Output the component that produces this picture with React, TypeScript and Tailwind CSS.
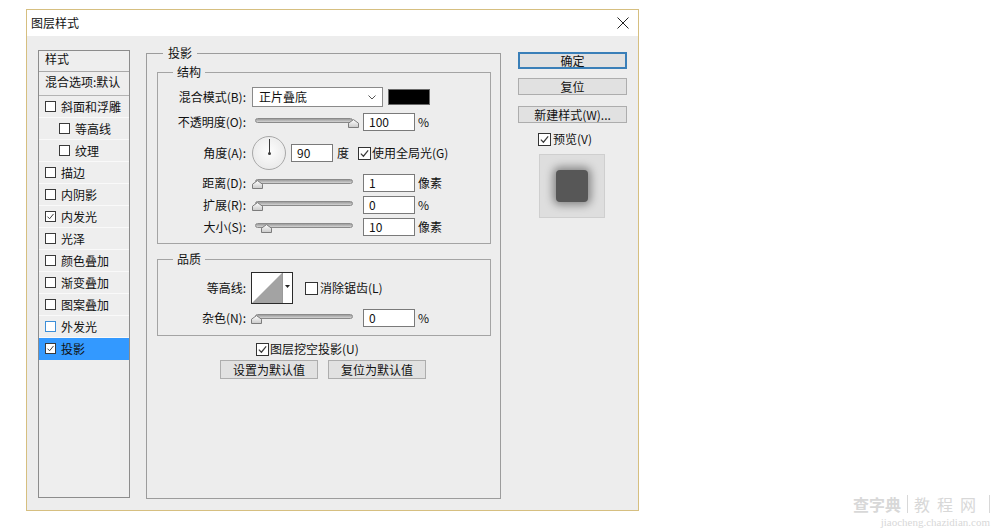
import React from 'react';

type CheckProps = { checked?: boolean; className?: string };

function Check({ checked = false, className = 'w-[12px] h-[12px] border-[#333333]' }: CheckProps) {
  return (
    <span className={`inline-flex shrink-0 items-center justify-center bg-white border ${className}`}>
      {checked && (
        <svg viewBox="0 0 12 12" className="w-full h-full">
          <polyline points="2,6.2 4.8,9 10,2.6" fill="none" stroke="#3a3a3a" strokeWidth="1.3" />
        </svg>
      )}
    </span>
  );
}

function Thumb({ className }: { className: string }) {
  return (
    <svg viewBox="0 0 11 9" className={`absolute top-[8px] w-[11px] h-[9px] ${className}`}>
      <defs>
        <linearGradient id="thumbg" x1="0" y1="0" x2="0" y2="1">
          <stop offset="0" stopColor="#ffffff" />
          <stop offset="1" stopColor="#c9c9c9" />
        </linearGradient>
      </defs>
      <polygon points="0.5,8.5 0.5,4.2 5.5,0.6 10.5,4.2 10.5,8.5" fill="url(#thumbg)" stroke="#7c7c7c" strokeWidth="1" />
    </svg>
  );
}

function Slider({ thumb }: { thumb: string }) {
  return (
    <div className="relative w-[105px] h-[22px] ml-[6px] shrink-0">
      <div className="mt-[7px] ml-[3px] w-[98px] h-[5px] rounded-full border border-[#8a8a8a] bg-gradient-to-b from-[#9c9c9c] to-[#d4d4d4]" />
      <Thumb className={thumb} />
    </div>
  );
}

function Field({ value, className = 'ml-[6px] w-[52px]' }: { value: string; className?: string }) {
  return (
    <div className={`h-[18px] shrink-0 border border-[#7a7a7a] bg-white pl-[5px] flex items-center ${className}`}>
      {value}
    </div>
  );
}

function Row({ label, children, className = '' }: { label: string; children: React.ReactNode; className?: string }) {
  return (
    <div className={`flex items-center h-[22px] ${className}`}>
      <span className="w-[88px] shrink-0 text-right">{label}</span>
      {children}
    </div>
  );
}

const styles: { name: string; checked?: boolean; indent?: boolean; hover?: boolean; active?: boolean }[] = [
  { name: '斜面和浮雕' },
  { name: '等高线', indent: true },
  { name: '纹理', indent: true },
  { name: '描边' },
  { name: '内阴影' },
  { name: '内发光', checked: true },
  { name: '光泽' },
  { name: '颜色叠加' },
  { name: '渐变叠加' },
  { name: '图案叠加' },
  { name: '外发光', hover: true },
  { name: '投影', checked: true, active: true },
];

function StyleList() {
  return (
    <div className="mt-[14px] ml-[11px] w-[92px] h-[448px] shrink-0 border border-[#8c8c8c] bg-[#eeeeee] overflow-hidden">
      <div className="h-[21px] pl-[6px] pt-[1px] border-b border-[#a9a9a9]">样式</div>
      <div className="h-[24px] flex items-start pt-[3px] pl-[6px] whitespace-nowrap border-b border-[#b3b3b3]">混合选项:默认</div>
      {styles.map((s) => (
        <div
          key={s.name}
          className={`h-[22px] flex items-center gap-[5px] border-b ${s.active ? 'bg-[#3399ff] border-[#3399ff]' : 'border-[#f9f9f9]'} ${s.indent ? 'pl-[20px]' : 'pl-[6px]'}`}
        >
          <Check
            checked={s.checked}
            className={`w-[11px] h-[11px] ${s.hover ? 'border-[#3d8fd8]' : 'border-[#3a3a3a]'}`}
          />
          <span>{s.name}</span>
        </div>
      ))}
    </div>
  );
}

function Dial() {
  return (
    <div className="ml-[6px] w-[34px] h-[34px] shrink-0 rounded-full border border-[#a8a8a8] bg-[radial-gradient(circle_at_50%_45%,#fdfdfd,#e4e4e4)] flex justify-center">
      <div className="w-[3px] h-full">
        <div className="mx-auto mt-[2px] w-px h-[15px] bg-[#3a3a3a]" />
        <div className="mx-auto -mt-[2px] w-[3px] h-[3px] rounded-full bg-[#3a3a3a]" />
      </div>
    </div>
  );
}

function Contour() {
  return (
    <div className="ml-[5px] w-[42px] h-[32px] shrink-0 flex border border-[#2a2a2a] bg-white">
      <svg viewBox="0 0 30 30" className="w-[30px] h-[30px]" preserveAspectRatio="none">
        <polygon points="0,30 30,0 30,30" fill="#a3a3a3" />
      </svg>
      <div className="flex-1 border-l border-[#9a9a9a] flex items-center justify-center pb-[3px]">
        <svg viewBox="0 0 5 3" className="w-[5px] h-[3px]">
          <polygon points="0,0 5,0 2.5,3" fill="#222" />
        </svg>
      </div>
    </div>
  );
}

function DropShadowPanel() {
  return (
    <fieldset className="mt-[10px] ml-[16px] w-[355px] h-[453px] shrink-0 border border-[#9c9c9c] pl-[10px] pr-[9px] pt-[5px]">
      <legend className="ml-[6px] px-[5px] leading-[14px]">投影</legend>

      <fieldset className="border border-[#a4a4a4] pb-[5px]">
        <legend className="ml-[15px] px-[4px] leading-[14px]">结构</legend>
        <Row label="混合模式(B):" className="mt-[7px]">
          <div className="ml-[6px] w-[131px] h-[20px] shrink-0 border border-[#8a8a8a] bg-white flex items-center justify-between pl-[6px] pr-[6px]">
            <span>正片叠底</span>
            <svg viewBox="0 0 8 5" className="w-[8px] h-[5px]">
              <polyline points="0.5,0.5 4,4 7.5,0.5" fill="none" stroke="#555" strokeWidth="1" />
            </svg>
          </div>
          <div className="ml-[5px] w-[42px] h-[16px] shrink-0 bg-black border border-[#6a6a6a]" />
        </Row>
        <Row label="不透明度(O):" className="mt-[3px]">
          <Slider thumb="left-[96px]" />
          <Field value="100" />
          <span className="ml-[3px]">%</span>
        </Row>
        <div className="flex items-center h-[36px] mt-[2px]">
          <span className="w-[88px] shrink-0 text-right">角度(A):</span>
          <Dial />
          <Field value="90" className="ml-[5px] w-[42px]" />
          <span className="ml-[4px]">度</span>
          <Check checked className="ml-[9px] w-[13px] h-[13px] border-[#333333]" />
          <span className="ml-[1px]">使用全局光(G)</span>
        </div>
        <Row label="距离(D):" className="mt-[1px]">
          <Slider thumb="left-0" />
          <Field value="1" />
          <span className="ml-[3px]">像素</span>
        </Row>
        <Row label="扩展(R):">
          <Slider thumb="left-0" />
          <Field value="0" />
          <span className="ml-[3px]">%</span>
        </Row>
        <Row label="大小(S):">
          <Slider thumb="left-[9px]" />
          <Field value="10" />
          <span className="ml-[3px]">像素</span>
        </Row>
      </fieldset>

      <fieldset className="mt-[8px] border border-[#a4a4a4] pb-[6px]">
        <legend className="ml-[15px] px-[4px] leading-[14px]">品质</legend>
        <div className="flex items-center h-[32px] mt-[6px]">
          <span className="w-[88px] shrink-0 text-right">等高线:</span>
          <Contour />
          <Check className="ml-[12px] w-[13px] h-[13px] border-[#333333]" />
          <span className="ml-[2px]">消除锯齿(L)</span>
        </div>
        <Row label="杂色(N):" className="mt-[3px]">
          <Slider thumb="left-[-1px]" />
          <Field value="0" />
          <span className="ml-[3px]">%</span>
        </Row>
      </fieldset>

      <div className="flex items-center h-[22px] mt-[2px] ml-[99px]">
        <Check checked className="w-[13px] h-[13px] border-[#333333]" />
        <span className="ml-[1px]">图层挖空投影(U)</span>
      </div>
      <div className="flex gap-[10px] ml-[63px]">
        <button className="w-[98px] h-[19px] border border-[#adadad] bg-[#e1e1e1] leading-[17px]">设置为默认值</button>
        <button className="w-[98px] h-[19px] border border-[#adadad] bg-[#e1e1e1] leading-[17px]">复位为默认值</button>
      </div>
    </fieldset>
  );
}

function RightColumn() {
  return (
    <div className="mt-[16px] ml-[17px] w-[109px] shrink-0 flex flex-col">
      <button className="h-[17px] border-2 border-[#3a7fb8] bg-[#e1e1e1] leading-[13px]">确定</button>
      <button className="mt-[9px] h-[17px] border border-[#adadad] bg-[#e1e1e1] leading-[15px]">复位</button>
      <button className="mt-[11px] h-[17px] border border-[#adadad] bg-[#e1e1e1] leading-[15px] whitespace-nowrap">新建样式(W)...</button>
      <div className="mt-[8px] h-[16px] flex items-center pl-[20px]">
        <Check checked className="w-[13px] h-[13px] border-[#333333]" />
        <span className="ml-[2px]">预览(V)</span>
      </div>
      <div className="mt-[7px] ml-[21px] w-[66px] h-[64px] border border-[#cfcfcf] bg-[#dedede] flex items-center justify-center">
        <div className="w-[32px] h-[32px] rounded-[4px] bg-[#575757] shadow-[0_0_8px_3px_rgba(0,0,0,0.4)]" />
      </div>
    </div>
  );
}

export default function App() {
  return (
    <div className="w-[1000px] h-[529px] bg-white flex text-[12px] leading-[14px] text-[#111] font-['Noto_Sans_CJK_SC','Noto_Sans',sans-serif] overflow-hidden">
      <div className="mt-[9px] ml-[26px] w-[613px] h-[502px] shrink-0 border border-[#d6bf80] flex flex-col">
        <div className="h-[26px] shrink-0 bg-white flex items-center justify-between pl-[4px] pr-[9px]">
          <span>图层样式</span>
          <svg viewBox="0 0 12 12" className="w-[12px] h-[12px]">
            <line x1="0.5" y1="0.5" x2="11.5" y2="11.5" stroke="#222" strokeWidth="1" />
            <line x1="11.5" y1="0.5" x2="0.5" y2="11.5" stroke="#222" strokeWidth="1" />
          </svg>
        </div>
        <div className="flex-1 bg-[#ededed] flex items-start">
          <StyleList />
          <DropShadowPanel />
          <RightColumn />
        </div>
      </div>
      <div className="flex-1 flex flex-col justify-end items-end pr-[10px] pb-[1px] text-[#d8d8d8]">
        <div className="flex items-center gap-[6px] text-[16px] leading-[18px]">
          <span className="font-bold">查字典</span>
          <span className="border-l border-r border-[#d8d8d8] px-[6px] tracking-[7px]">教程网</span>
        </div>
        <div className="font-['Liberation_Serif',serif] text-[11px] leading-[12px] mt-[3px]">jiaocheng.chazidian.com</div>
      </div>
    </div>
  );
}
